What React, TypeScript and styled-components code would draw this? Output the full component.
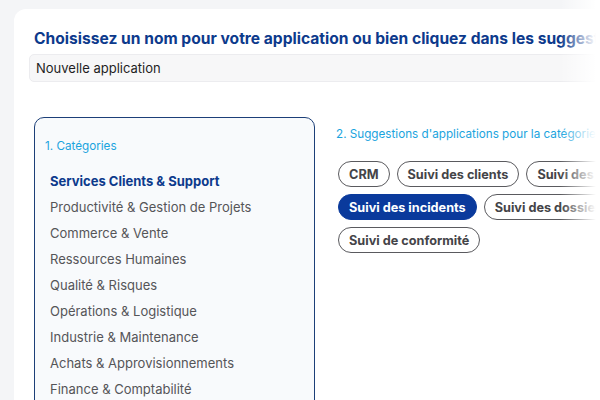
import React, { useState } from "react";
import styled, { createGlobalStyle } from "styled-components";

const GlobalStyle = createGlobalStyle`
  html, body {
    margin: 0;
    padding: 0;
    background-color: #f4f5f7;
    overflow: hidden;
    font-family: "Inter", "Noto Sans", sans-serif;
  }
`;

const Page = styled.div`
  position: relative;
  width: 600px;
  height: 400px;
  overflow: hidden;
  padding: 9px 0 0 14px;
  box-sizing: border-box;
`;

const Card = styled.div`
  width: 900px;
  min-height: 420px;
  background-color: #ffffff;
  border-radius: 12px;
  padding: 20px 20px 0 20px;
  box-sizing: border-box;
`;

const Title = styled.h1`
  margin: 0;
  font-size: 15.6px;
  line-height: 20px;
  font-weight: 700;
  color: #0d3a8c;
  white-space: nowrap;
`;

const NameInput = styled.input`
  display: block;
  margin: 5px 0 0 -5px;
  width: 880px;
  height: 28px;
  padding: 0 6px;
  box-sizing: border-box;
  background-color: #f7f7f8;
  border: 1px solid #ececef;
  border-radius: 5px;
  font-family: "Inter", sans-serif;
  font-size: 13px;
  color: #1f1f1f;
  outline: none;
`;

const Columns = styled.div`
  display: flex;
  gap: 21px;
  margin-top: 35px;
`;

const CategoryBox = styled.div`
  width: 281px;
  flex-shrink: 0;
  min-height: 300px;
  box-sizing: border-box;
  border: 1px solid #1c3f78;
  border-radius: 10px;
  background-color: #f8fafc;
  padding: 20px 10px 0 10px;
`;

const StepLabel = styled.div`
  font-size: 11.7px;
  line-height: 16px;
  color: #1ba4de;
  white-space: nowrap;
`;

const CategoryList = styled.ul`
  list-style: none;
  margin: 14px 0 0 0;
  padding: 0 0 0 5px;
  display: flex;
  flex-direction: column;
`;

const CategoryItem = styled.li<{ $active?: boolean }>`
  height: 26px;
  line-height: 26px;
  font-size: 13px;
  font-weight: ${(p) => (p.$active ? 700 : 400)};
  color: ${(p) => (p.$active ? "#0d3a8c" : "#555558")};
  white-space: nowrap;
  cursor: pointer;
`;

const Suggestions = styled.div`
  padding-top: 9px;
  flex: 1;
`;

const ChipList = styled.div`
  display: flex;
  flex-wrap: wrap;
  gap: 7px;
  margin-top: 19px;
  padding-left: 2px;
  width: 380px;
`;

const Chip = styled.button<{ $active?: boolean }>`
  height: 26px;
  padding: 0 10px;
  border-radius: 13px;
  border: 1px solid ${(p) => (p.$active ? "#0a3a9c" : "#5a5a5e")};
  background-color: ${(p) => (p.$active ? "#0a3a9c" : "#ffffff")};
  color: ${(p) => (p.$active ? "#ffffff" : "#444448")};
  font-family: "Inter", sans-serif;
  font-size: 12.7px;
  font-weight: 700;
  white-space: nowrap;
  cursor: pointer;
`;

const Fade = styled.div`
  position: absolute;
  top: 0;
  right: 0;
  width: 40px;
  height: 100%;
  background: linear-gradient(to right, rgba(255, 255, 255, 0), #ffffff 90%);
  pointer-events: none;
`;

const categories = [
  "Services Clients & Support",
  "Productivité & Gestion de Projets",
  "Commerce & Vente",
  "Ressources Humaines",
  "Qualité & Risques",
  "Opérations & Logistique",
  "Industrie & Maintenance",
  "Achats & Approvisionnements",
  "Finance & Comptabilité",
];

const suggestions = [
  "CRM",
  "Suivi des clients",
  "Suivi des appels",
  "Suivi des incidents",
  "Suivi des dossiers",
  "Suivi de conformité",
];

const App = () => {
  const [name, setName] = useState("Nouvelle application");
  const [category, setCategory] = useState(0);
  const [picked, setPicked] = useState("Suivi des incidents");

  return (
    <>
      <GlobalStyle />
      <Page>
        <Card>
          <Title>
            Choisissez un nom pour votre application ou bien cliquez dans les
            suggestions ci-dessous
          </Title>
          <NameInput value={name} onChange={(e) => setName(e.target.value)} />
          <Columns>
            <CategoryBox>
              <StepLabel>1. Catégories</StepLabel>
              <CategoryList>
                {categories.map((c, i) => (
                  <CategoryItem
                    key={c}
                    $active={i === category}
                    onClick={() => setCategory(i)}
                  >
                    {c}
                  </CategoryItem>
                ))}
              </CategoryList>
            </CategoryBox>
            <Suggestions>
              <StepLabel>
                2. Suggestions d'applications pour la catégorie{" "}
                {categories[category]}
              </StepLabel>
              <ChipList>
                {suggestions.map((s) => (
                  <Chip
                    key={s}
                    $active={s === picked}
                    onClick={() => {
                      setPicked(s);
                      setName(s);
                    }}
                  >
                    {s}
                  </Chip>
                ))}
              </ChipList>
            </Suggestions>
          </Columns>
        </Card>
        <Fade />
      </Page>
    </>
  );
};

export default App;
